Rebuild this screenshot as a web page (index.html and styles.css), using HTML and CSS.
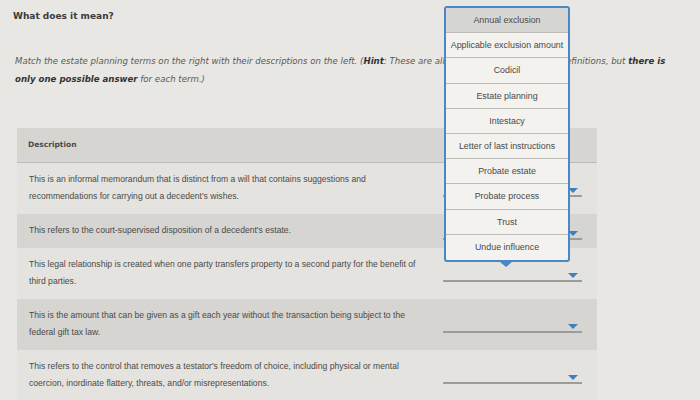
FILE: index.html
```html
<!DOCTYPE html>
<html>
<head>
<meta charset="utf-8">
<link rel="stylesheet" href="styles.css">
</head>
<body>
<div class="page">
  <h1 class="title">What does it mean?</h1>
  <p class="instructions">Match the estate planning terms on the right with their descriptions on the left. (<b>Hint</b>: These are all of the listed terms for the definitions, but <b>there is only one possible answer</b> for each term.)</p>

  <table class="match">
    <thead>
      <tr><th class="desc">Description</th><th class="pick"></th></tr>
    </thead>
    <tbody>
      <tr class="light">
        <td class="desc">This is an informal memorandum that is distinct from a will that contains suggestions and recommendations for carrying out a decedent's wishes.</td>
        <td class="pick"><div class="select"><span class="arrow"></span></div></td>
      </tr>
      <tr class="dark">
        <td class="desc">This refers to the court-supervised disposition of a decedent's estate.</td>
        <td class="pick"><div class="select"><span class="arrow"></span></div></td>
      </tr>
      <tr class="light">
        <td class="desc">This legal relationship is created when one party transfers property to a second party for the benefit of third parties.</td>
        <td class="pick"><div class="select"><span class="arrow"></span></div></td>
      </tr>
      <tr class="dark">
        <td class="desc">This is the amount that can be given as a gift each year without the transaction being subject to the federal gift tax law.</td>
        <td class="pick"><div class="select"><span class="arrow"></span></div></td>
      </tr>
      <tr class="light">
        <td class="desc">This refers to the control that removes a testator's freedom of choice, including physical or mental coercion, inordinate flattery, threats, and/or misrepresentations.</td>
        <td class="pick"><div class="select"><span class="arrow"></span></div></td>
      </tr>
    </tbody>
  </table>

  <ul class="menu">
    <li class="active">Annual exclusion</li>
    <li>Applicable exclusion amount</li>
    <li>Codicil</li>
    <li>Estate planning</li>
    <li>Intestacy</li>
    <li>Letter of last instructions</li>
    <li>Probate estate</li>
    <li>Probate process</li>
    <li>Trust</li>
    <li>Undue influence</li>
  </ul>
</div>
</body>
</html>
```

FILE: styles.css
```css
html, body {
  margin: 0;
  padding: 0;
  background: #e8e7e3;
}

.page {
  position: relative;
  width: 700px;
  height: 400px;
  overflow: hidden;
  padding: 10px 0 0 0;
  box-sizing: border-box;
}

.title {
  margin: 0 0 0 13px;
  font-family: "DejaVu Sans", sans-serif;
  font-size: 9px;
  line-height: 12px;
  font-weight: bold;
  color: #3a3a3a;
}

.instructions {
  margin: 30px 0 0 15px;
  width: 660px;
  font-family: "DejaVu Sans", sans-serif;
  font-style: italic;
  font-size: 8.6px;
  line-height: 18px;
  color: #5a5a58;
}

.instructions b {
  font-weight: bold;
  color: #333;
}

.match {
  margin: 40px 0 0 17px;
  width: 580px;
  border-collapse: collapse;
  font-family: "Liberation Sans", Arial, sans-serif;
  font-size: 8.6px;
  color: #4a4a48;
}

.match th {
  background: #d6d5d1;
  text-align: left;
  font-family: "DejaVu Sans", sans-serif;
  font-weight: bold;
  font-size: 7.5px;
  color: #4a4a48;
  height: 34px;
  padding: 0 11px;
  border-bottom: 1px solid #bcbbb7;
  box-sizing: border-box;
}

.match td {
  padding: 8.5px 21px 8.5px 12px;
  line-height: 17px;
  vertical-align: middle;
}

.match td.desc {
  width: 395px;
}

.match td.pick {
  width: 152px;
  padding: 0;
}

.light td { background: #e4e3df; }
.dark td { background: #d6d5d1; }

.select {
  position: relative;
  margin: 6px 15px 0 -2px;
  height: 10px;
  border-bottom: 2px solid #9c9c9c;
}

.arrow {
  position: absolute;
  right: 4px;
  top: 3px;
  width: 0;
  height: 0;
  border-left: 5px solid transparent;
  border-right: 5px solid transparent;
  border-top: 5px solid #3f7fc4;
}

.menu {
  position: absolute;
  left: 444px;
  top: 6px;
  width: 126px;
  margin: 0;
  padding: 0;
  list-style: none;
  background: #f3f2ef;
  border: 2px solid #4a87c6;
  border-radius: 3px;
  box-sizing: border-box;
  font-family: "Liberation Sans", Arial, sans-serif;
  font-size: 8.9px;
  color: #4a4a48;
}

.menu li {
  height: 25.2px;
  line-height: 25px;
  text-align: center;
  border-bottom: 1px solid #bdbcb8;
  box-sizing: border-box;
  white-space: nowrap;
}

.menu li:last-child {
  border-bottom: none;
}

.menu li.active {
  background: #d6d6d4;
}

.menu::after {
  content: "";
  position: absolute;
  left: 54px;
  bottom: -7px;
  width: 0;
  height: 0;
  border-left: 6px solid transparent;
  border-right: 6px solid transparent;
  border-top: 5px solid #4a87c6;
}
```
